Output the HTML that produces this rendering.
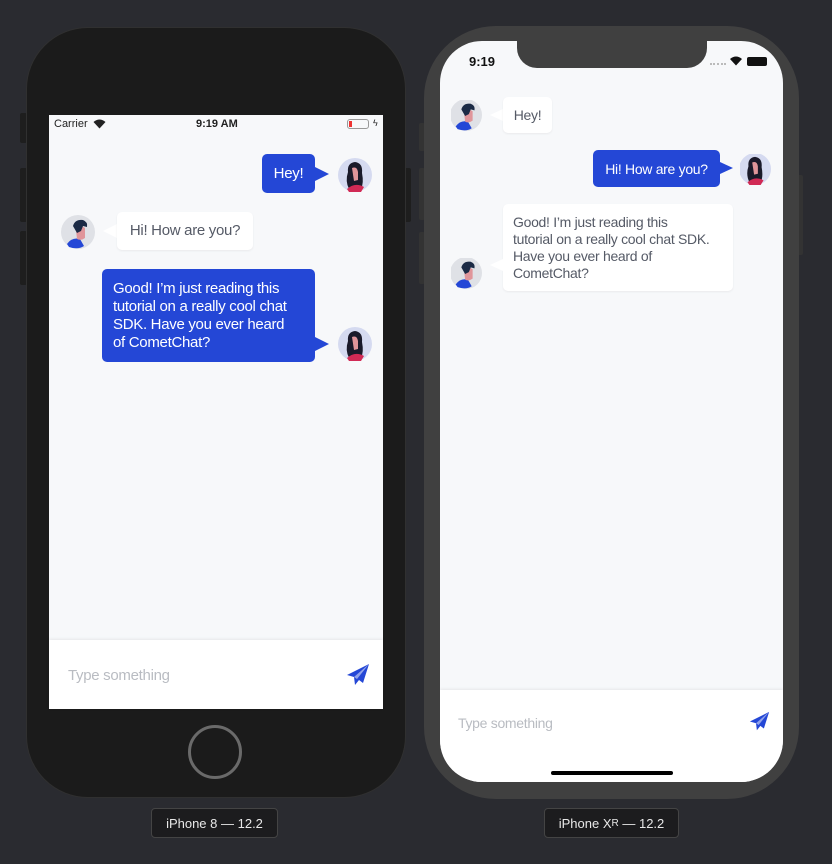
<!DOCTYPE html>
<html><head><style>
*{margin:0;padding:0;box-sizing:border-box}
body{width:832px;height:864px;background:#2a2b30;position:relative;overflow:hidden;font-family:"Liberation Sans",sans-serif}
.a{position:absolute}
.btn{position:absolute;background:#1e1e1e;border-radius:2px}
.bub{position:absolute;border-radius:5px;font-size:15px;line-height:18px;padding:0 11px;display:flex;align-items:center;white-space:nowrap;letter-spacing:-0.3px}
.c{justify-content:center;padding:0}
.blue{background:#2447d6;color:#fff}
.white{background:#fff;color:#555a66;box-shadow:0 1px 2px rgba(0,0,0,.06)}
.lbl{position:absolute;border:1px solid #444;border-radius:4px;background:#1c1c1e;color:#e8e8e8;font-size:13px;display:flex;align-items:center;justify-content:center}
.ph{position:absolute;color:#b9bcc2;font-size:15px;letter-spacing:-0.3px}
</style></head><body>
<svg width="0" height="0" style="position:absolute">
<defs>
<g id="man"><circle cx="0" cy="0" r="17" fill="#dfe1e6"/><path d="M-11 12 Q-6 5 2 7 L6 14 Q0 18 -9 15Z" fill="#2447d6"/><path d="M-2 -2 Q2 -8 7 -4 L7 6 Q3 9 -1 7Z" fill="#e0959a"/><path d="M-5 -6 Q-3 -13 5 -12 Q10 -10 9 -5 L5 -6 L3 -1 L-1 1Z" fill="#1b2a45"/></g>
<g id="woman"><circle cx="0" cy="0" r="17" fill="#d5daf0"/><path d="M-7 -3 Q-8 -12 0 -13 Q8 -12 7 -2 Q9 8 6 14 L-6 14 Q-10 6 -7 -3Z" fill="#1a1a2a"/><path d="M-3 -7 Q2 -9 3 -3 L3 5 L-1 6 Z" fill="#e0959a"/><path d="M-8 14 Q0 7 9 12 L6 17 L-6 17Z" fill="#d12a55"/></g>
</defs></svg>

<!-- iPhone 8 -->
<div class="btn" style="left:20px;top:113px;width:7px;height:30px"></div>
<div class="btn" style="left:20px;top:168px;width:7px;height:54px"></div>
<div class="btn" style="left:20px;top:231px;width:7px;height:54px"></div>
<div class="btn" style="left:404px;top:168px;width:7px;height:54px"></div>
<div class="a" style="left:26px;top:27px;width:380px;height:771px;background:#1b1b1b;border:1px solid #303030;border-radius:62px"></div>
<div class="a" style="left:49px;top:115px;width:334px;height:594px;background:#f7f8fa"></div>
<div class="a" style="left:54px;top:118px;font-size:11px;color:#222">Carrier</div>
<svg class="a" style="left:93px;top:119px" width="13" height="10" viewBox="0 0 13 10"><path d="M6.5 9.5 L0.5 3 Q6.5 -2 12.5 3Z" fill="#222"/></svg>
<div class="a" style="left:196px;top:118px;font-size:11px;font-weight:bold;color:#222">9:19 AM</div>
<div class="a" style="left:347px;top:119px;width:22px;height:10px;border:1px solid #999;border-radius:3px"><div style="margin:1px;width:3px;height:6px;background:#e33"></div></div>
<div class="a" style="left:373px;top:118px;font-size:9px;color:#222">ϟ</div>

<div class="bub blue c" style="left:262px;top:154px;width:53px;height:39px">Hey!</div>
<svg class="a" style="left:315px;top:167px" width="15" height="14"><path d="M0 0 L14 7 L0 14Z" fill="#2447d6"/></svg>
<svg class="a" style="left:337px;top:157px" width="36" height="36"><use href="#woman" x="18" y="18"/></svg>

<svg class="a" style="left:60px;top:214px" width="36" height="36"><use href="#man" x="18" y="18"/></svg>
<svg class="a" style="left:103px;top:224px" width="15" height="14"><path d="M14 0 L0 7 L14 14Z" fill="#fff"/></svg>
<div class="bub white c" style="left:117px;top:212px;width:136px;height:38px">Hi! How are you?</div>

<div class="bub blue" style="left:102px;top:269px;width:213px;height:93px;line-height:18px">Good! I’m just reading this<br>tutorial on a really cool chat<br>SDK. Have you ever heard<br>of CometChat?</div>
<svg class="a" style="left:315px;top:337px" width="15" height="14"><path d="M0 0 L14 7 L0 14Z" fill="#2447d6"/></svg>
<svg class="a" style="left:337px;top:326px" width="36" height="36"><use href="#woman" x="18" y="18"/></svg>

<div class="a" style="left:49px;top:640px;width:334px;height:69px;background:#fff;box-shadow:0 -1px 3px rgba(0,0,0,.07)"></div>
<div class="ph" style="left:68px;top:667px">Type something</div>
<svg class="a" style="left:346px;top:663px" width="24" height="24" viewBox="0 0 24 24"><path d="M23 1 L1 12 L8 14 L9 22 L13 17 L17 20Z" fill="#2447d6"/><path d="M8 14 L23 1 L11 16Z" fill="#fff" opacity=".5"/></svg>
<div class="a" style="left:188px;top:725px;width:54px;height:54px;border:3px solid #6a6a6a;border-radius:50%"></div>

<!-- iPhone XR -->
<div class="btn" style="left:419px;top:123px;width:6px;height:28px;background:#333"></div>
<div class="btn" style="left:419px;top:168px;width:6px;height:52px;background:#333"></div>
<div class="btn" style="left:419px;top:232px;width:6px;height:52px;background:#333"></div>
<div class="btn" style="left:797px;top:175px;width:6px;height:80px;background:#333"></div>
<div class="a" style="left:424px;top:26px;width:375px;height:773px;background:#404040;border-radius:72px"></div>
<div class="a" style="left:440px;top:41px;width:343px;height:741px;background:#f7f8fa;border-radius:42px;overflow:hidden">
  <div class="a" style="left:0;top:649px;width:343px;height:92px;background:#fff;box-shadow:0 -1px 3px rgba(0,0,0,.07)"></div>
</div>
<div class="a" style="left:517px;top:41px;width:190px;height:27px;background:#404040;border-radius:0 0 20px 20px"></div>
<div class="a" style="left:469px;top:54px;font-size:13px;font-weight:bold;color:#111">9:19</div>
<div class="a" style="left:710px;top:63px;width:16px;height:2px;border-top:2px dotted #bbb"></div>
<svg class="a" style="left:729px;top:56px" width="14" height="10" viewBox="0 0 13 10"><path d="M6.5 9.5 L0.5 3 Q6.5 -2 12.5 3Z" fill="#111"/></svg>
<div class="a" style="left:747px;top:57px;width:20px;height:9px;background:#111;border-radius:2px"></div>

<svg class="a" style="left:451px;top:100px" width="32" height="32"><use href="#man" x="16" y="16" transform="scale(.94)"/></svg>
<svg class="a" style="left:490px;top:109px" width="14" height="12"><path d="M13 0 L0 6 L13 12Z" fill="#fff"/></svg>
<div class="bub white c" style="left:503px;top:97px;width:49px;height:36px;font-size:14px">Hey!</div>

<div class="bub blue c" style="left:593px;top:150px;width:127px;height:37px;font-size:14px">Hi! How are you?</div>
<svg class="a" style="left:720px;top:162px" width="14" height="12"><path d="M0 0 L13 6 L0 12Z" fill="#2447d6"/></svg>
<svg class="a" style="left:740px;top:154px" width="32" height="32"><use href="#woman" x="16" y="16" transform="scale(.94)"/></svg>

<div class="bub white" style="left:503px;top:204px;width:230px;height:87px;padding:0 10px;font-size:14px;line-height:17px">Good! I’m just reading this<br>tutorial on a really cool chat SDK.<br>Have you ever heard of<br>CometChat?</div>
<svg class="a" style="left:490px;top:259px" width="14" height="12"><path d="M13 0 L0 6 L13 12Z" fill="#fff"/></svg>
<svg class="a" style="left:451px;top:258px" width="32" height="32"><use href="#man" x="16" y="16" transform="scale(.94)"/></svg>

<div class="ph" style="left:458px;top:715px;font-size:14px">Type something</div>
<svg class="a" style="left:749px;top:711px" width="21" height="21" viewBox="0 0 24 24"><path d="M23 1 L1 12 L8 14 L9 22 L13 17 L17 20Z" fill="#2447d6"/><path d="M8 14 L23 1 L11 16Z" fill="#fff" opacity=".5"/></svg>
<div class="a" style="left:551px;top:771px;width:122px;height:4px;background:#000;border-radius:2px"></div>

<div class="lbl" style="left:151px;top:808px;width:127px;height:30px">iPhone 8 — 12.2</div>
<div class="lbl" style="left:544px;top:808px;width:135px;height:30px">iPhone X<span style="font-size:10px">R</span>&nbsp;— 12.2</div>
</body></html>
